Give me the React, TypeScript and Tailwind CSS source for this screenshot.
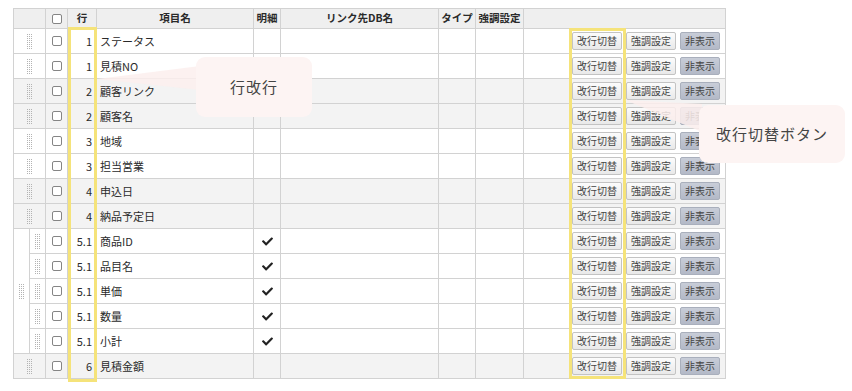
import { FaCheck } from "react-icons/fa";

type Row = { n: string; name: string; detail?: boolean; sub?: boolean };

const rows: Row[] = [
  { n: "1", name: "ステータス" },
  { n: "1", name: "見積NO" },
  { n: "2", name: "顧客リンク" },
  { n: "2", name: "顧客名" },
  { n: "3", name: "地域" },
  { n: "3", name: "担当営業" },
  { n: "4", name: "申込日" },
  { n: "4", name: "納品予定日" },
  { n: "5.1", name: "商品ID", detail: true, sub: true },
  { n: "5.1", name: "品目名", detail: true, sub: true },
  { n: "5.1", name: "単価", detail: true, sub: true },
  { n: "5.1", name: "数量", detail: true, sub: true },
  { n: "5.1", name: "小計", detail: true, sub: true },
  { n: "6", name: "見積金額" },
];

function Handle() {
  const dots = [];
  for (let i = 0; i < 8; i++) {
    for (const x of [0, 2, 4]) {
      dots.push(<rect key={x + "-" + i} x={x} y={i * 2} width={1} height={1} />);
    }
  }
  return (
    <svg width="5" height="15" viewBox="0 0 5 15" fill="#b3b3b3" className="mx-auto block">
      {dots}
    </svg>
  );
}

function Check() {
  return <div className="mx-auto w-[10px] h-[10px] border border-[#858585] rounded-[2px] bg-white" />;
}

const td = "border border-[#d2d2d2] p-0 align-middle";

export default function App() {
  const firstSub = rows.findIndex((r) => r.sub);
  const subCount = rows.filter((r) => r.sub).length;

  return (
    <div className="relative w-[852px] h-[391px] bg-white overflow-hidden font-['Noto_Sans_CJK_JP',sans-serif] text-[#2a2a2a]">
      <div className="pl-[13px] pt-[8px]">
        <table className="table-fixed border-collapse w-[712px] text-[11px] leading-none">
          <colgroup>
            <col className="w-[16px]" />
            <col className="w-[16px]" />
            <col className="w-[22px]" />
            <col className="w-[29px]" />
            <col className="w-[157px]" />
            <col className="w-[27px]" />
            <col className="w-[158px]" />
            <col className="w-[37px]" />
            <col className="w-[48px]" />
            <col className="w-[202px]" />
          </colgroup>
          <thead>
            <tr className="h-[20px] bg-[#efefef] font-bold text-[10.5px]">
              <th colSpan={2} className={td}></th>
              <th className={td}><Check /></th>
              <th className={td}>行</th>
              <th className={td}>項目名</th>
              <th className={td}>明細</th>
              <th className={td}>リンク先DB名</th>
              <th className={td}>タイプ</th>
              <th className={td}>強調設定</th>
              <th className={td}></th>
            </tr>
          </thead>
          <tbody>
            {rows.map((r, i) => {
              const gray = ["2", "4", "6"].includes(r.n);
              return (
                <tr key={i} className={"h-[25px] " + (gray ? "bg-[#f3f3f3]" : "bg-white")}>
                  {r.sub ? (
                    <>
                      {i === firstSub && (
                        <td rowSpan={subCount} className={td + " bg-white"}>
                          <Handle />
                        </td>
                      )}
                      <td className={td}><Handle /></td>
                    </>
                  ) : (
                    <td colSpan={2} className={td}><Handle /></td>
                  )}
                  <td className={td}><Check /></td>
                  <td className={td + " text-right pr-[4px]"}>{r.n}</td>
                  <td className={td + " pl-[3px]"}>{r.name}</td>
                  <td className={td}>
                    {r.detail && <FaCheck className="mx-auto text-[#222]" size={11} />}
                  </td>
                  <td className={td}></td>
                  <td className={td}></td>
                  <td className={td}></td>
                  <td className={td}>
                    <div className="flex justify-end gap-[4px] pr-[5px] text-[10px] text-[#444]">
                      <button className="w-[50px] h-[18px] border border-[#c3c3c3] rounded-[2px] bg-linear-to-b from-[#fcfcfc] to-[#e9e9e9]">
                        改行切替
                      </button>
                      <button className="w-[50px] h-[18px] border border-[#c3c3c3] rounded-[2px] bg-linear-to-b from-[#fcfcfc] to-[#e9e9e9]">
                        強調設定
                      </button>
                      <button className="w-[40px] h-[18px] border border-[#a9afbc] rounded-[2px] bg-linear-to-b from-[#c8cdd8] to-[#b3b9c7]">
                        非表示
                      </button>
                    </div>
                  </td>
                </tr>
              );
            })}
          </tbody>
        </table>
      </div>

      {/* yellow highlight boxes */}
      <div className="absolute left-[68px] top-[27px] w-[29px] h-[355px] border-[3px] border-[#f5e37a]" />
      <div className="absolute left-[569px] top-[28px] w-[57px] h-[351px] border-[3px] border-[#f5e37a]" />

      {/* callout tails */}
      <svg className="absolute inset-0 pointer-events-none" width="852" height="391">
        <polygon points="97,79 200,66 200,90" fill="#fcefed" fillOpacity="0.85" />
        <polygon points="625,100 702,104 702,132" fill="#fcefed" fillOpacity="0.85" />
      </svg>

      {/* callouts */}
      <div className="absolute left-[196px] top-[57px] w-[116px] h-[60px] rounded-[9px] bg-[#fdf4f3] flex items-center justify-center text-[15px] tracking-[1px] text-[#444]">
        行改行
      </div>
      <div className="absolute left-[699px] top-[105px] w-[146px] h-[58px] rounded-[9px] bg-[#fdf4f3] flex items-center justify-center text-[15px] tracking-[1px] text-[#444]">
        改行切替ボタン
      </div>
    </div>
  );
}
